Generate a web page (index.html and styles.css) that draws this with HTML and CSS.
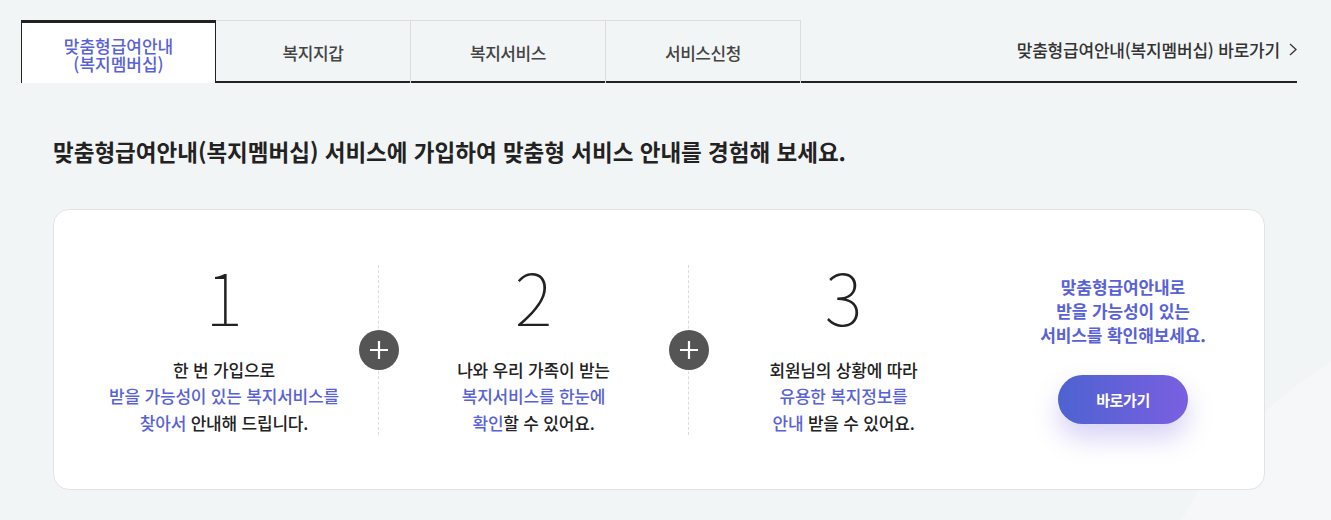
FILE: index.html
```html
<!DOCTYPE html>
<html lang="ko">
<head>
<meta charset="utf-8">
<title>맞춤형급여안내</title>
<link rel="stylesheet" href="styles.css">
</head>
<body>
<div class="page">
  <div class="wrap">
    <nav class="tabs">
      <ul class="tab-list">
        <li class="tab active"><span>맞춤형급여안내<br>(복지멤버십)</span></li>
        <li class="tab"><span>복지지갑</span></li>
        <li class="tab"><span>복지서비스</span></li>
        <li class="tab"><span>서비스신청</span></li>
      </ul>
      <a class="shortcut" href="#">맞춤형급여안내(복지멤버십) 바로가기
        <svg class="chev" width="8" height="13" viewBox="0 0 8 13"><path d="M1 1 L7 6.5 L1 12" fill="none" stroke="#333" stroke-width="1.3"/></svg>
      </a>
    </nav>
    <section class="content">
      <h2 class="title">맞춤형급여안내(복지멤버십) 서비스에 가입하여 맞춤형 서비스 안내를 경험해 보세요.</h2>
      <div class="card">
        <div class="step step-1 divided">
          <div class="num">1</div>
          <p class="desc">한 번 가입으로<br><em>받을 가능성이 있는 복지서비스를<br>찾아서</em> 안내해 드립니다.</p>
          <span class="plus"><svg width="40" height="40" viewBox="0 0 40 40"><path d="M20 11 V29 M11 20 H29" stroke="#fff" stroke-width="2.2"/></svg></span>
        </div>
        <div class="step step-2 divided">
          <div class="num">2</div>
          <p class="desc">나와 우리 가족이 받는<br><em>복지서비스를 한눈에<br>확인</em>할 수 있어요.</p>
          <span class="plus"><svg width="40" height="40" viewBox="0 0 40 40"><path d="M20 11 V29 M11 20 H29" stroke="#fff" stroke-width="2.2"/></svg></span>
        </div>
        <div class="step step-3">
          <div class="num">3</div>
          <p class="desc">회원님의 상황에 따라<br><em>유용한 복지정보를<br>안내</em> 받을 수 있어요.</p>
        </div>
        <div class="cta">
          <p class="cta-text">맞춤형급여안내로<br>받을 가능성이 있는<br>서비스를 확인해보세요.</p>
          <a class="cta-btn" href="#">바로가기</a>
        </div>
      </div>
    </section>
  </div>
</div>
</body>
</html>
```

FILE: styles.css
```css
html, body {
  margin: 0;
  padding: 0;
}
body {
  background: #f2f5f6;
  font-family: "Noto Sans CJK KR", "Noto Sans", sans-serif;
  color: #222;
}
.page {
  position: relative;
  height: 520px;
  overflow: hidden;
}
.page::before {
  content: "";
  position: absolute;
  left: 1136px;
  top: 306px;
  width: 800px;
  height: 800px;
  border-radius: 50%;
  background: #f6f7f9;
}
.wrap {
  position: relative;
  z-index: 1;
  width: 1276px;
  padding: 20px 0 0 21px;
}
.tabs {
  display: flex;
  height: 63px;
  box-sizing: border-box;
  border-bottom: 2px solid #222;
}
.tab-list {
  display: flex;
  list-style: none;
  margin: 0 0 -2px 0;
  padding: 0;
}
.tab {
  width: 196px;
  height: 63px;
  box-sizing: border-box;
  border: 1px solid #dcdcdc;
  border-bottom: none;
  display: flex;
  align-items: center;
  justify-content: center;
  font-size: 17px;
  font-weight: 500;
  color: #444;
  letter-spacing: -0.4px;
  text-align: center;
}
.tab + .tab {
  margin-left: -1px;
}
.tab:first-child {
  width: 195px;
}
.tab.active {
  position: relative;
  z-index: 1;
  background: #fff;
  border: 1px solid #222;
  border-top: 3px solid #222;
  border-bottom: none;
  color: #5862d6;
  line-height: 18px;
  letter-spacing: 0;
  padding-top: 3px;
}
.shortcut {
  margin-left: auto;
  align-self: center;
  display: flex;
  align-items: center;
  gap: 9px;
  font-size: 17px;
  font-weight: 500;
  color: #333;
  letter-spacing: -0.2px;
  text-decoration: none;
  padding-bottom: 2px;
}
.chev {
  display: block;
}
.content {
  padding: 0 32px;
}
.title {
  margin: 52px 0 42px;
  font-size: 22.5px;
  line-height: 32px;
  font-weight: 700;
  letter-spacing: 0;
  color: #222;
}
.card {
  height: 281px;
  box-sizing: border-box;
  background: #fff;
  border: 1px solid #e1e3e5;
  border-radius: 16px;
  padding: 0 16px;
  display: flex;
  align-items: center;
}
.step {
  position: relative;
  width: 309px;
  height: 170px;
  box-sizing: border-box;
  display: flex;
  flex-direction: column;
  align-items: center;
}
.step-2 {
  width: 310px;
}
.divided {
  border-right: 1px dashed #dcdcdc;
}
.num {
  font-size: 72px;
  line-height: 60px;
  height: 60px;
  font-weight: 100;
  color: #222;
}
.desc {
  margin: 32px 0 0;
  font-size: 17px;
  line-height: 26.5px;
  font-weight: 500;
  letter-spacing: -0.2px;
  text-align: center;
  color: #222;
}
.desc em, .cta-text {
  font-style: normal;
  color: #5862d6;
}
.plus {
  position: absolute;
  right: -21px;
  top: 65px;
  width: 40px;
  height: 40px;
  border-radius: 50%;
  background: #555;
  z-index: 2;
}
.plus svg {
  display: block;
}
.cta {
  flex: 1;
  display: flex;
  flex-direction: column;
  align-items: center;
}
.cta-text {
  margin: 0;
  font-size: 17px;
  line-height: 24px;
  font-weight: 700;
  letter-spacing: -0.1px;
  text-align: center;
}
.cta-btn {
  margin-top: 28px;
  width: 130px;
  height: 49px;
  border-radius: 25px;
  background: linear-gradient(90deg, #4d63d0, #7a5fe1);
  box-shadow: 0 14px 26px rgba(110, 95, 220, 0.28);
  color: #fff;
  font-size: 15px;
  font-weight: 700;
  letter-spacing: -0.4px;
  text-decoration: none;
  display: flex;
  align-items: center;
  justify-content: center;
}
```
